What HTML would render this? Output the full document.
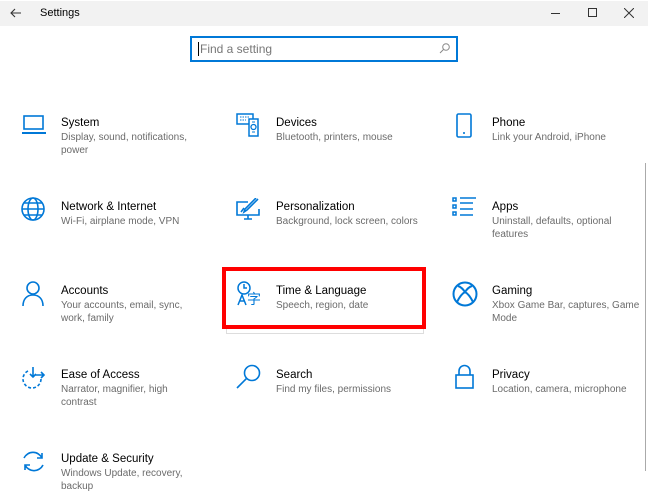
<!DOCTYPE html>
<html><head><meta charset="utf-8"><style>
*{margin:0;padding:0;box-sizing:border-box}
body{width:648px;height:497px;background:#fff;font-family:"Segoe UI","Liberation Sans",sans-serif;position:relative;overflow:hidden}
.tb{position:absolute;left:0;top:1px;width:648px;height:25px;background:#f2f2f2}
.tb span{position:absolute;font-size:11px;color:#000;top:6px}
.search{position:absolute;left:190px;top:36px;width:268px;height:26px;border:2px solid #0078d7;background:#fff}
.search span{position:absolute;left:8px;top:4px;font-size:12px;color:#777}
.search i{position:absolute;left:6px;top:4px;width:1px;height:14px;background:#000}
.it{position:absolute}
.t{position:absolute;font-size:11.5px;color:#000;white-space:nowrap;margin-top:2px}
.d{position:absolute;font-size:10px;color:#6b6b6b;line-height:13px;width:142px}
.c3{width:150px}
.red{position:absolute;left:222px;top:267px;width:204px;height:62px;border:4px solid #f00}
.hov{position:absolute;left:226px;top:329px;width:198px;height:5px;border:1px solid #ddd;border-top:none}
.sb{position:absolute;left:645px;top:163px;width:1px;height:308px;background:#aaa}
</style></head><body>
<div class="tb">
<svg style="position:absolute;left:10px;top:7px" width="12" height="10" viewBox="0 0 12 10"><path d="M11 5H1M5 1L1 5l4 4" stroke="#333" fill="none" stroke-width="1.1"/></svg>
<span style="left:40px">Settings</span>
<div style="position:absolute;left:551px;top:12px;width:9px;height:1px;background:#333"></div>
<div style="position:absolute;left:588px;top:7px;width:9px;height:9px;border:1px solid #333"></div>
<svg style="position:absolute;left:624px;top:7px" width="10" height="10"><path d="M0 0L10 10M10 0L0 10" stroke="#333"/></svg>
</div>
<div class="search"><i></i><span>Find a setting</span>
<svg style="position:absolute;right:6px;top:5px" width="11" height="11"><circle cx="7" cy="4" r="3.3" stroke="#888" fill="none"/><path d="M4.6 6.4L1 10" stroke="#888"/></svg></div>
<div class="sb"></div>

<svg class="it" style="left:21px;top:114px" width="26" height="22"><rect x="3" y="2" width="19" height="13" stroke="#0078d7" stroke-width="1.6" fill="none"/><path d="M1 19h24" stroke="#0078d7" stroke-width="2"/></svg>
<div class="t" style="left:61px;top:115px">System</div>
<div class="d" style="left:61px;top:131px">Display, sound, notifications, power</div>

<svg class="it" style="left:236px;top:113px" width="26" height="26"><rect x="1" y="1" width="16" height="10" stroke="#0078d7" stroke-width="1.5" fill="none"/><path d="M4 4h10M4 7h6" stroke="#0078d7" stroke-dasharray="1.5 1"/><rect x="13" y="6" width="9" height="17" stroke="#0078d7" stroke-width="1.5" fill="#fff"/><circle cx="17.5" cy="14" r="2.5" stroke="#0078d7" fill="none" stroke-width="1.3"/><path d="M16 9h3M16 19h3" stroke="#0078d7"/></svg>
<div class="t" style="left:276px;top:115px">Devices</div>
<div class="d" style="left:276px;top:131px">Bluetooth, printers, mouse</div>

<svg class="it" style="left:455px;top:113px" width="20" height="26"><rect x="2" y="1" width="14" height="23" rx="1.5" stroke="#0078d7" stroke-width="1.6" fill="none"/><path d="M8 20h2" stroke="#0078d7" stroke-width="1.6"/></svg>
<div class="t" style="left:492px;top:115px">Phone</div>
<div class="d c3" style="left:492px;top:131px">Link your Android, iPhone</div>

<svg class="it" style="left:21px;top:197px" width="26" height="26"><g stroke="#0078d7" stroke-width="1.6" fill="none"><circle cx="12" cy="12" r="11"/><ellipse cx="12" cy="12" rx="5" ry="11"/><path d="M1 12h22M3 6h18M3 18h18"/></g></svg>
<div class="t" style="left:61px;top:199px">Network &amp; Internet</div>
<div class="d" style="left:61px;top:215px">Wi-Fi, airplane mode, VPN</div>

<svg class="it" style="left:236px;top:198px" width="26" height="24"><g stroke="#0078d7" stroke-width="1.6" fill="none"><path d="M12 4H1v13h22v-6"/><path d="M8 21h8M12 17v4"/><path d="M22 1L11 12l-3 2 1-3L20 0"/><path d="M5 14l3-4"/></g></svg>
<div class="t" style="left:276px;top:199px">Personalization</div>
<div class="d" style="left:276px;top:215px">Background, lock screen, colors</div>

<svg class="it" style="left:452px;top:197px" width="26" height="24"><g stroke="#0078d7" stroke-width="1.5" fill="none"><rect x="1" y="1" width="3" height="3"/><rect x="1" y="8" width="3" height="3"/><rect x="1" y="15" width="3" height="3"/><path d="M8 1h16M8 6h13M8 12h13M8 18h13"/></g></svg>
<div class="t" style="left:492px;top:199px">Apps</div>
<div class="d c3" style="left:492px;top:215px">Uninstall, defaults, optional features</div>

<svg class="it" style="left:22px;top:281px" width="24" height="26"><g stroke="#0078d7" stroke-width="1.6" fill="none"><circle cx="11" cy="7" r="6"/><path d="M1 25c0-7 4-11 10-11s10 4 10 11"/></g></svg>
<div class="t" style="left:61px;top:283px">Accounts</div>
<div class="d" style="left:61px;top:299px">Your accounts, email, sync, work, family</div>

<svg class="it" style="left:236px;top:281px" width="28" height="26"><g stroke="#0078d7" stroke-width="1.5" fill="none"><circle cx="8" cy="7" r="6"/><path d="M8 3v4h3"/><path d="M2 24l4-10 4 10M3.5 20h5"/></g><text x="11" y="23" font-size="14" fill="#0078d7" font-family="Noto Sans CJK SC, sans-serif">字</text></svg>
<div class="t" style="left:276px;top:283px">Time &amp; Language</div>
<div class="d" style="left:276px;top:299px">Speech, region, date</div>

<svg class="it" style="left:452px;top:281px" width="26" height="26"><circle cx="13" cy="13" r="11.5" stroke="#0078d7" stroke-width="2" fill="none"/><path d="M5 21C8 15 11 12 13 11c2 1 5 4 8 10M6 5c3 1 5 3 7 6 2-3 4-5 7-6" stroke="#0078d7" stroke-width="2" fill="none"/></svg>
<div class="t" style="left:492px;top:283px">Gaming</div>
<div class="d c3" style="left:492px;top:299px">Xbox Game Bar, captures, Game Mode</div>

<svg class="it" style="left:21px;top:365px" width="26" height="26"><g stroke="#0078d7" stroke-width="1.6" fill="none"><path d="M20 14a9 9 0 1 1-12-8.5" stroke-dasharray="3 2"/><path d="M12 2v10M9 9l3 3 3-3M14 10h9M20 7l3 3-3 3"/></g></svg>
<div class="t" style="left:61px;top:367px">Ease of Access</div>
<div class="d" style="left:61px;top:383px">Narrator, magnifier, high contrast</div>

<svg class="it" style="left:236px;top:364px" width="26" height="26"><g stroke="#0078d7" stroke-width="1.6" fill="none"><circle cx="16" cy="9" r="7.5"/><path d="M10.5 14.5L1 24"/></g></svg>
<div class="t" style="left:276px;top:367px">Search</div>
<div class="d" style="left:276px;top:383px">Find my files, permissions</div>

<svg class="it" style="left:455px;top:364px" width="20" height="26"><g stroke="#0078d7" stroke-width="1.6" fill="none"><rect x="1" y="11" width="17" height="13"/><path d="M4 11V7a5.5 5.5 0 0 1 11 0v4"/></g></svg>
<div class="t" style="left:492px;top:367px">Privacy</div>
<div class="d c3" style="left:492px;top:383px">Location, camera, microphone</div>

<svg class="it" style="left:21px;top:449px" width="26" height="26"><g stroke="#0078d7" stroke-width="1.6" fill="none"><path d="M3 9a10 10 0 0 1 18 0M21 4v5h-5"/><path d="M22 16a10 10 0 0 1-18 0M4 21v-5h5"/></g></svg>
<div class="t" style="left:61px;top:451px">Update &amp; Security</div>
<div class="d" style="left:61px;top:467px">Windows Update, recovery, backup</div>

<div class="red"></div><div class="hov"></div>
</body></html>
